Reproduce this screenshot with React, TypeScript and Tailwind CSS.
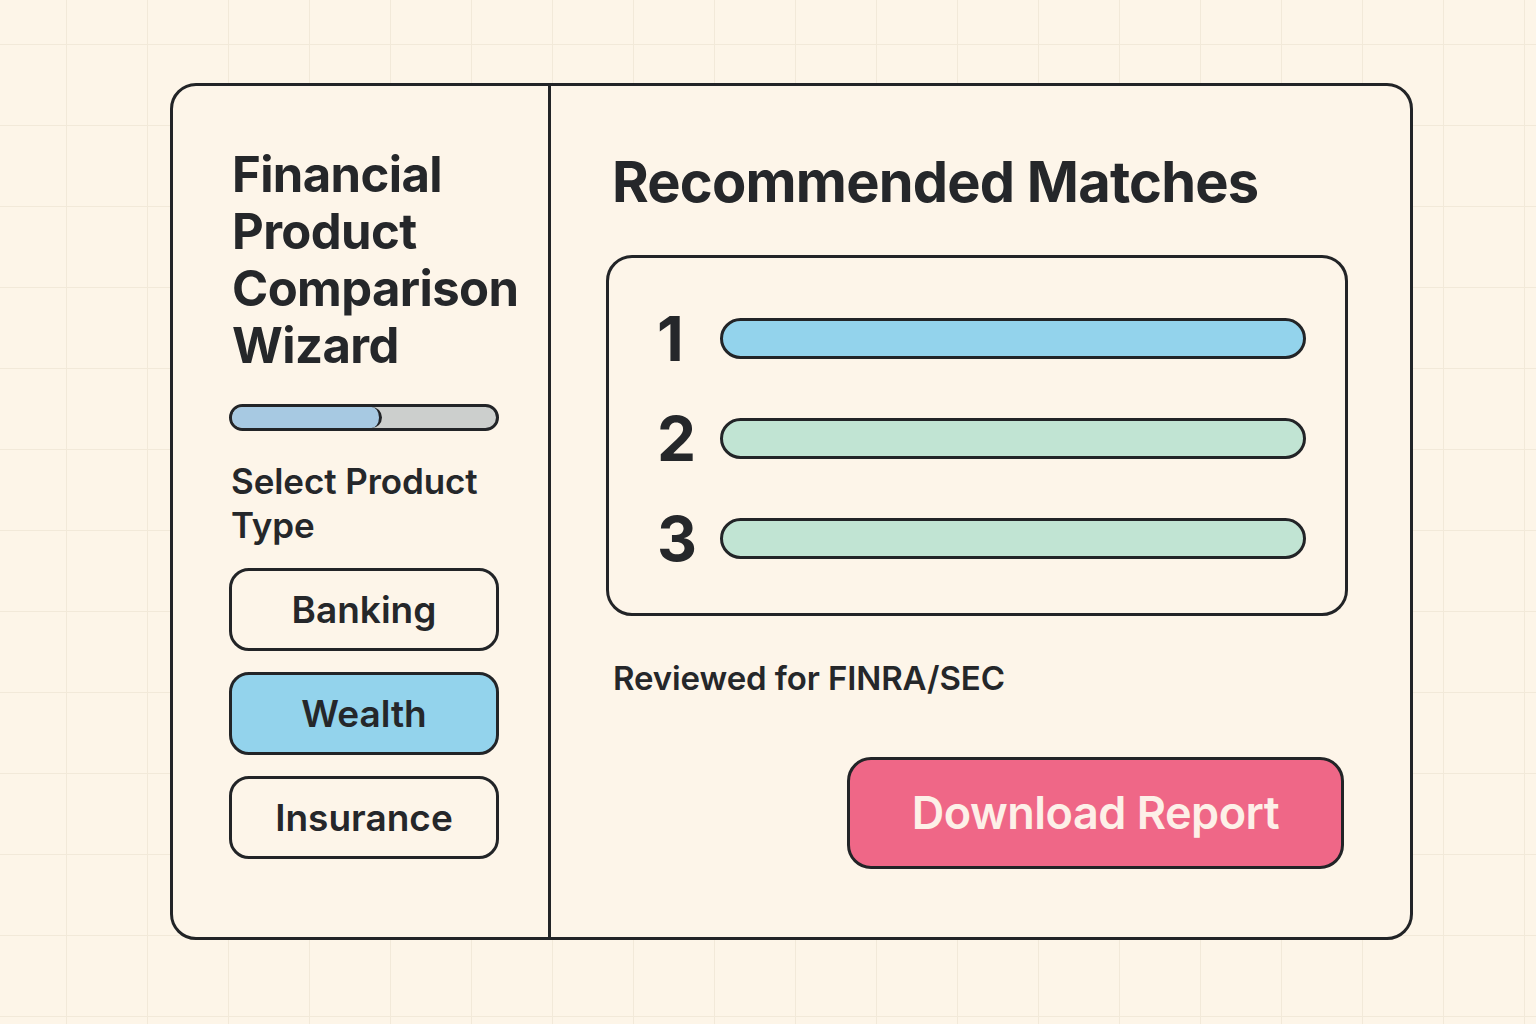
import React from "react";

const products = [
  { label: "Banking", active: false },
  { label: "Wealth", active: true },
  { label: "Insurance", active: false },
];

const matches = [
  { rank: 1, color: "bg-[#93d3ec]" },
  { rank: 2, color: "bg-[#c1e4d3]" },
  { rank: 3, color: "bg-[#c1e4d3]" },
];

export default function App() {
  return (
    <div
      className="w-full h-screen overflow-hidden bg-[#fdf5e8] bg-[linear-gradient(to_right,#f2e9d9_1px,transparent_1px),linear-gradient(to_bottom,#f2e9d9_1px,transparent_1px)] bg-[size:81px_81px] bg-[position:66px_44px] pt-[83px] pl-[170px] text-[#25272a]"
      style={{ fontFamily: "Inter, 'Liberation Sans', sans-serif" }}
    >
      <div className="flex w-[1243px] h-[857px] rounded-[26px] border-[3px] border-[#222427] bg-[#fdf5e9]">
        {/* Left: wizard steps */}
        <aside className="w-[378px] shrink-0 border-r-[3px] border-[#222427] pl-[56px] pt-[60px]">
          <h1 className="ml-[3px] text-[49px] leading-[57px] font-bold tracking-[-0.6px]">
            Financial
            <br />
            Product
            <br />
            Comparison
            <br />
            Wizard
          </h1>

          <div className="mt-[30px] flex w-[270px] h-[27px] rounded-full border-[3px] border-[#222427] bg-[#cccfcd] overflow-hidden">
            <div className="w-[150px] h-full rounded-r-full border-r-[3px] border-[#222427] bg-[#a7c9e2]" />
          </div>

          <p className="mt-[28px] ml-[2px] text-[35px] leading-[44px] font-semibold tracking-[-0.1px]">
            Select Product
            <br />
            Type
          </p>

          <div className="mt-[21px] flex flex-col gap-[21px]">
            {products.map((p) => (
              <button
                key={p.label}
                className={`w-[270px] h-[83px] rounded-[20px] border-[3px] border-[#222427] flex items-center justify-center text-[37px] font-semibold ${
                  p.active ? "bg-[#93d3ec]" : "bg-[#fdf5e9]"
                }`}
              >
                {p.label}
              </button>
            ))}
          </div>
        </aside>

        {/* Right: results */}
        <main className="flex-1 pl-[55px] pr-[62px] pt-[68px] flex flex-col">
          <h2 className="text-[56px] leading-none font-bold tracking-[-0.8px] ml-[6px]">
            Recommended Matches
          </h2>

          <div className="mt-[45px] rounded-[26px] border-[3px] border-[#222427] pl-[48px] pr-[39px] pt-[60px] pb-[54px] flex flex-col gap-[59px]">
            {matches.map((m) => (
              <div key={m.rank} className="flex items-center h-[41px]">
                <span className="w-[63px] shrink-0 text-[62px] leading-none font-bold">
                  {m.rank}
                </span>
                <div
                  className={`flex-1 h-[41px] rounded-full border-[3px] border-[#222427] ${m.color}`}
                />
              </div>
            ))}
          </div>

          <p className="mt-[46px] ml-[7px] text-[33px] leading-none font-semibold tracking-[-0.1px]">
            Reviewed for FINRA/SEC
          </p>

          <div className="mt-[62px] flex justify-end pr-[4px]">
            <button className="w-[497px] h-[112px] rounded-[24px] border-[3px] border-[#222427] bg-[#ef6787] text-[#fdf0e8] text-[45px] font-semibold tracking-[-0.5px]">
              Download Report
            </button>
          </div>
        </main>
      </div>
    </div>
  );
}
